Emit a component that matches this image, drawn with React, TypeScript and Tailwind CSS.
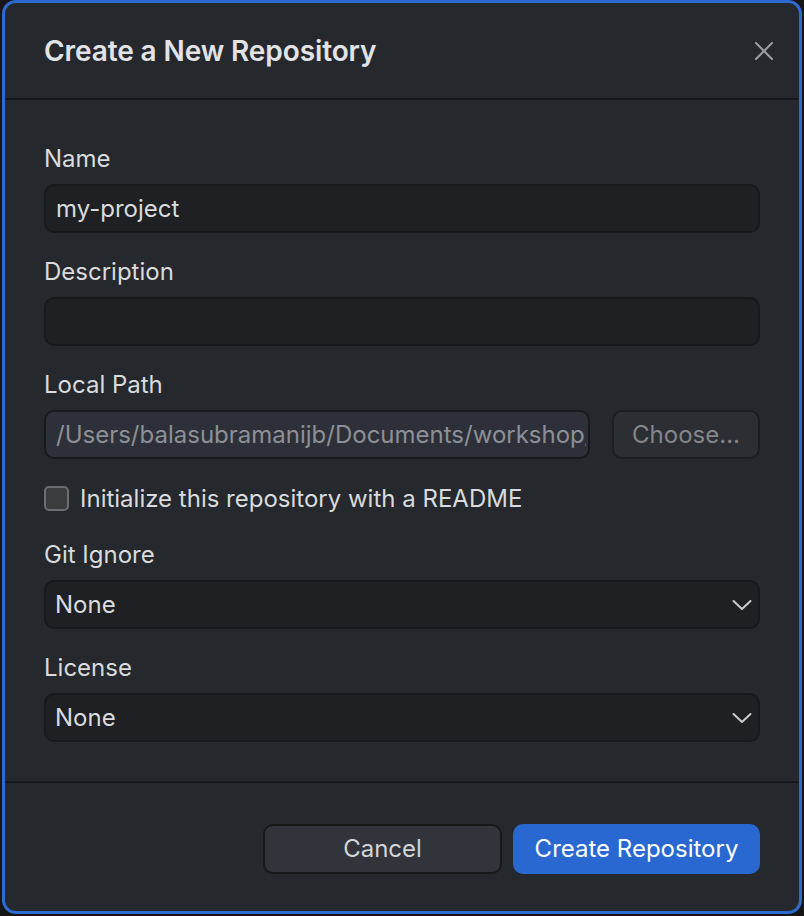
import React from "react";

const font = { fontFamily: 'Inter, "Noto Sans", sans-serif' };

function Label({ children }: { children: React.ReactNode }) {
  return <div className="text-[24px] leading-[28px] text-[#d9dbde] mb-[11px]">{children}</div>;
}

function Chevron() {
  return (
    <svg width="20" height="11" viewBox="0 0 20 11" className="absolute right-[6px] top-1/2 -translate-y-1/2" fill="none">
      <path d="M1.5 1.5 L10 9.5 L18.5 1.5" stroke="#c9cbce" strokeWidth="2" strokeLinecap="round" strokeLinejoin="round" />
    </svg>
  );
}

function Select({ value }: { value: string }) {
  return (
    <div className="relative h-[49px] rounded-[10px] border-2 border-[#18191c] bg-[#1e2024] flex items-center pl-[9px] text-[24px] text-[#d9dbde]">
      {value}
      <Chevron />
    </div>
  );
}

export default function App() {
  return (
    <div className="w-[804px] h-[916px] bg-[#161616] px-[2px] pb-[2px]" style={font}>
      <div className="h-full rounded-[14px] border-[3px] border-[#2b6bd2] bg-[#25282c] flex flex-col overflow-hidden">
        <div className="h-[97px] flex items-center justify-between pl-[39px] pr-[25px] border-b-2 border-[#17181a]">
          <div className="text-[28px] font-semibold text-[#e1e3e6] tracking-[-0.1px] pt-[1px]">Create a New Repository</div>
          <svg width="20" height="20" viewBox="0 0 20 20" fill="none" className="mt-[1px]">
            <path d="M2 2 L18 18 M18 2 L2 18" stroke="#9c9ea2" strokeWidth="2" strokeLinecap="round" />
          </svg>
        </div>
        <div className="flex-1 flex flex-col px-[39px] pt-[45px]">
          <Label>Name</Label>
          <div className="h-[49px] rounded-[10px] border-2 border-[#18191c] bg-[#1e2024] flex items-center pl-[10px] text-[24px] text-[#d9dbde]">
            my-project
          </div>
          <div className="h-[25px]" />
          <Label>Description</Label>
          <div className="h-[49px] rounded-[10px] border-2 border-[#18191c] bg-[#1e2024]" />
          <div className="h-[25px]" />
          <Label>Local Path</Label>
          <div className="flex gap-[22px] h-[49px]">
            <div className="flex-1 min-w-0 rounded-[10px] border-2 border-[#18191c] bg-[#2d3038] flex items-center pl-[10px] pr-[2px] text-[24px] text-[#8d9096] overflow-hidden whitespace-nowrap">
              <span className="block overflow-hidden">/Users/balasubramanijb/Documents/workshop/</span>
            </div>
            <div className="w-[148px] rounded-[10px] border-2 border-[#1c1d20] bg-[#2b2e33] flex items-center justify-center text-[24px] text-[#83868b]">
              Choose...
            </div>
          </div>
          <div className="h-[27px]" />
          <div className="flex items-center gap-[11px] h-[25px]">
            <div className="w-[25px] h-[25px] shrink-0 rounded-[5px] border-2 border-[#6c6d70] bg-[#3b3c3e]" />
            <div className="text-[24px] leading-[28px] text-[#d9dbde] whitespace-nowrap">Initialize this repository with a README</div>
          </div>
          <div className="h-[30px]" />
          <Label>Git Ignore</Label>
          <Select value="None" />
          <div className="h-[25px]" />
          <Label>License</Label>
          <Select value="None" />
        </div>
        <div className="border-t-2 border-[#17181a] h-[130px] flex items-start justify-end gap-[11px] px-[39px] pt-[41px]">
          <div className="w-[239px] h-[50px] rounded-[10px] border-2 border-[#17181a] bg-[#31343b] flex items-center justify-center text-[24px] text-[#d2d4d8]">
            Cancel
          </div>
          <div className="w-[247px] h-[50px] rounded-[10px] bg-[#2968d0] flex items-center justify-center text-[24px] text-white">
            Create Repository
          </div>
        </div>
      </div>
    </div>
  );
}
